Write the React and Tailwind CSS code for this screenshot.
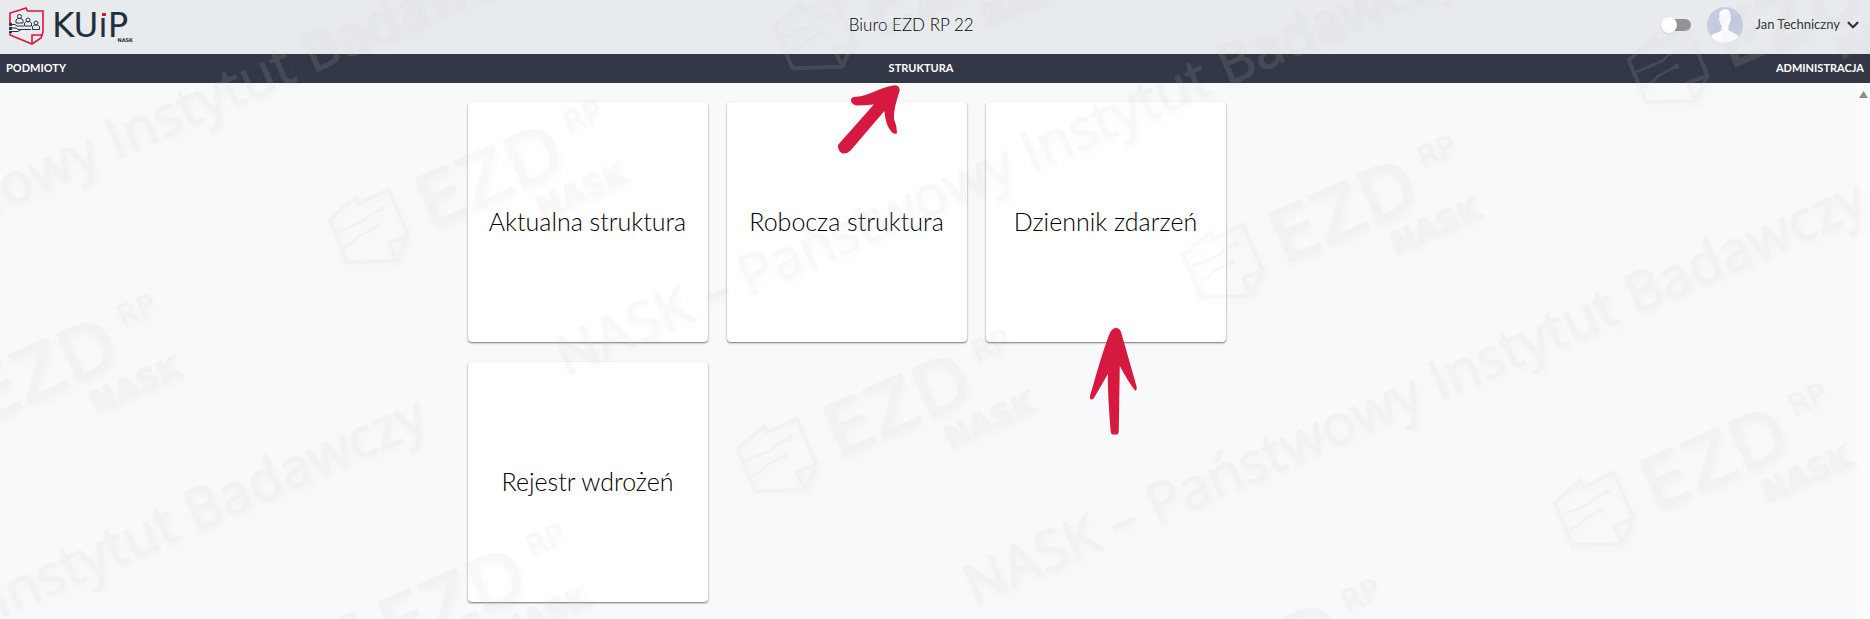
import React, { useState } from 'react';
import { ChevronDown } from 'lucide-react';

const TILES = ['Aktualna struktura', 'Robocza struktura', 'Dziennik zdarzeń', 'Rejestr wdrożeń'];

const LOGO_MARKS = [
  [-118, 414],
  [328, 220],
  [773, 26],
  [291, 644],
  [736, 449],
  [1182, 255],
  [1627, 60],
  [1106, 699],
  [1553, 503],
];

const TEXT_MARKS = [
  [-349, 364],
  [566, 377],
  [974, 606],
  [-466, 823],
];

function KuipLogo() {
  return (
    <svg className="h-[54px] w-[161px]" viewBox="0 0 161 54" role="img" aria-label="KUiP NASK">
      <g fill="none" stroke="#dc1440" strokeWidth="1.6">
        <path d="M10 23V13l10-3 6-2 1.500 3H43V32l-1 3-1 3-9 6-22-9V32" />
        <path d="M43 35H32v9" />
      </g>
      <g fill="none" stroke="#2b3444" strokeWidth="1">
        <circle cx="19.500" cy="16.500" r="2" />
        <path d="M16 23v-3l2-1.500h3l2 1.500v3z" />
        <circle cx="28" cy="20" r="2" />
        <path d="M24.500 26v-3l2-1.500h3l2 1.500v3z" />
        <circle cx="36" cy="23" r="2" />
        <path d="M32.500 29.500v-3l2-1.500h3l2 1.500v3z" />
        <path d="M10 24.500h5l2 1.500h7M10 28h6l2 1.500h13M10 31.500h8l3-2" />
      </g>
      <path fill="#2b3444" d="M9 23h3v3H9zM9 27h3v3H9zM9 31h3v2H9z" />
      <text x="52" y="37" fontSize="34" fill="#23303c" fontFamily="DejaVu Sans">
        KUiP
      </text>
      <rect x="101" y="10" width="6" height="6" fill="#e8ebee" />
      <rect x="102" y="13" width="4" height="3" fill="#dc1440" />
      <text x="133" y="42" textAnchor="end" fontSize="5" fontWeight="bold" fill="#23303c" fontFamily="DejaVu Sans">
        NASK
      </text>
    </svg>
  );
}

function Avatar() {
  return (
    <svg className="size-9 rounded-full" viewBox="0 0 36 36" aria-hidden="true">
      <rect width="36" height="36" fill="#c5cce2" />
      <path
        fill="#fff"
        d="M18 2c4 0 6 3 5.500 8 1 1 .5 4-.5 4.500-.3 2-1 3-1.500 4V23c1 2 8 3 10 6 .5 3-5 7-13.500 7S4 32 4.500 29c2-3 9-4 10-6v-4.500c-.7-1-1.300-2-1.500-4-1-.5-1.500-3.500-.5-4.500C12 6 13 3 18 2z"
      />
    </svg>
  );
}

function DiagonalArrow() {
  return (
    <svg
      className="pointer-events-none absolute top-[31px] -left-[51px] z-20 h-[69px] w-[62px]"
      viewBox="50 255 187 207"
      fill="#d6193f"
      aria-hidden="true"
    >
      <path d="M158 313Q130 316 104 316 89 312 89 300 91 290 104 290C145 287 175 261 222 255Q236 256 236 270C230 295 217 325 219 358Q228 378 228 400 221 405 212 396C200 385 192 360 190 333L88 452Q75 464 62 460 46 450 51 434Z" />
    </svg>
  );
}

function UpArrow() {
  return (
    <svg
      className="pointer-events-none absolute top-[226px] left-[104px] z-20 h-[107px] w-[47px]"
      viewBox="90 53 142 323"
      fill="#d6193f"
      aria-hidden="true"
    >
      <path d="M168 53Q180 53 184 66L231 230Q232 244 226 242 205 215 180 168L177 360Q177 375 170 375H158Q153 374 152 360 143 250 144 192L101 266Q95 272 90 266 89 255 95 242 120 150 147 75 155 53 168 53Z" />
    </svg>
  );
}

function LogoMark({ x, y }) {
  return (
    <g transform={`translate(${x} ${y})`}>
      <g transform="scale(0.3333)" fill="none" stroke="#c4c4c4" strokeLinejoin="round">
        <path strokeWidth="12" d="M5 0 83-68 92-48 183-91 242 47 208 122 58 127ZM242 47 183 69 208 122" />
        <path strokeWidth="8" d="M28 36 108 2 122-13 162-33M48 80 78 67 90 50 148 19" />
        <circle cx="162" cy="-33" r="8" fill="#c4c4c4" />
        <circle cx="148" cy="19" r="8" fill="#c4c4c4" />
      </g>
      <g fontFamily="DejaVu Sans">
        <text transform="translate(102 10) rotate(-23.700)" fontSize="73">EZD</text>
        <text transform="translate(241 -86) rotate(-23.700)" fontSize="30">RP</text>
        <text transform="translate(214 0) rotate(-23.700)" fontSize="31" fontWeight="bold">NASK</text>
      </g>
    </g>
  );
}

function Watermark() {
  return (
    <svg
      className="pointer-events-none absolute inset-0 z-10 h-full w-full overflow-hidden opacity-[0.13]"
      aria-hidden="true"
    >
      <g fill="#c4c4c4" stroke="#c4c4c4" className="[filter:drop-shadow(2px_4px_4px_rgba(0,0,0,0.22))]">
        {LOGO_MARKS.map(([x, y]) => (
          <LogoMark key={`${x}-${y}`} x={x} y={y} />
        ))}
        {TEXT_MARKS.map(([x, y]) => (
          <text
            key={`${x}-${y}`}
            transform={`translate(${x} ${y}) rotate(-23.700)`}
            fontSize="56"
            fontWeight="500"
            fontFamily="Open Sans"
          >
            NASK – Państwowy Instytut Badawczy
          </text>
        ))}
      </g>
    </svg>
  );
}

function Header() {
  const [enabled, setEnabled] = useState(false);

  return (
    <header className="flex h-[54px] items-center justify-between bg-[#e8ebee] pr-2 pb-1">
      <a href="#" className="block pt-1">
        <KuipLogo />
      </a>
      <h1 className="text-[17px] font-light text-black">Biuro EZD RP 22</h1>
      <div className="flex items-center">
        <label className="relative mr-4 flex h-4 w-[30px] cursor-pointer items-center">
          <input
            type="checkbox"
            aria-label="Tryb ciemny"
            checked={enabled}
            onChange={(e) => setEnabled(e.target.checked)}
            className="peer absolute inset-0 m-0 appearance-none"
          />
          <span className="h-3 w-full rounded-full bg-[#909293]" />
          <span className="absolute left-0 size-4 rounded-full bg-white shadow-sm peer-checked:left-3.5" />
        </label>
        <Avatar />
        <button type="button" className="ml-3 flex items-center gap-1 text-[13px]">
          Jan Techniczny
          <ChevronDown className="size-[18px]" strokeWidth={3} />
        </button>
      </div>
    </header>
  );
}

function Nav() {
  return (
    <nav className="flex h-[29px] items-center justify-between bg-[#333846] px-1.5 text-[11px] font-bold text-white">
      <a href="#">PODMIOTY</a>
      <div className="relative flex h-full items-center">
        <a href="#">STRUKTURA</a>
        <DiagonalArrow />
      </div>
      <a href="#">ADMINISTRACJA</a>
    </nav>
  );
}

export default function App() {
  return (
    <div className="relative flex min-h-screen flex-col overflow-hidden bg-[#f8f9fb] font-['Lato',sans-serif] text-[#333333]">
      <Header />
      <Nav />
      <div className="flex flex-1">
        <main className="flex-1 pt-[19px] pr-[24%] pb-4 pl-[25%]">
          <div className="flex flex-wrap gap-x-[19px] gap-y-5">
            {TILES.map((title) => (
              <div key={title} className="relative">
                <button
                  type="button"
                  className="flex size-60 items-center justify-center rounded bg-white text-[25px] font-light text-black shadow-[0_1px_2px_rgba(0,0,0,0.55)]"
                >
                  {title}
                </button>
                {title === 'Dziennik zdarzeń' && <UpArrow />}
              </div>
            ))}
          </div>
        </main>
        <div className="flex w-[13px] justify-center bg-[#fcfcfc] pt-2">
          <svg className="h-[7px] w-[9px]" viewBox="0 0 9 7" aria-hidden="true">
            <path d="M4.500 0 9 7H0z" fill="#8b8b8b" />
          </svg>
        </div>
      </div>
      <Watermark />
    </div>
  );
}
